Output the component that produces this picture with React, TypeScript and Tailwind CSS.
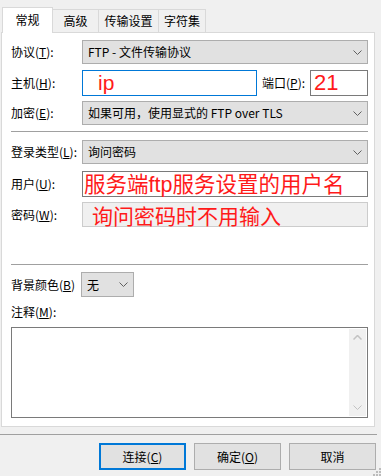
import type { ReactNode } from 'react'

const cjk = { fontFamily: '"Noto Sans CJK SC", "Noto Sans", sans-serif' }
const arial = { fontFamily: '"Liberation Sans", "Noto Sans CJK SC", sans-serif' }

function Chevron({ color = '#606060' }: { color?: string }) {
  return (
    <svg width="9" height="5" viewBox="0 0 9 5" className="shrink-0">
      <path d="M0.5 0.5 L4.5 4.5 L8.5 0.5" fill="none" stroke={color} strokeWidth="1" />
    </svg>
  )
}

function Label({ text, hot, suffix = ':' }: { text: string; hot: string; suffix?: string }) {
  return (
    <span className="block text-[12px] leading-[14px] text-black whitespace-nowrap">
      {text}(<u>{hot}</u>){suffix}
    </span>
  )
}

function Select({ value, className }: { value: string; className?: string }) {
  return (
    <div
      className={`flex items-center justify-between border border-[#adadad] bg-[#e1e1e1] pl-[5px] pr-[5px] ${className ?? ''}`}
    >
      <span className="text-[12px] leading-[14px] text-black whitespace-nowrap">{value}</span>
      <Chevron />
    </div>
  )
}

function Row({ label, children, className }: { label: ReactNode; children: ReactNode; className?: string }) {
  return (
    <div className={`flex items-center ${className ?? ''}`}>
      <div className="w-[71px] shrink-0">{label}</div>
      {children}
    </div>
  )
}

function Tab({ title, active, className }: { title: string; active?: boolean; className?: string }) {
  return (
    <div
      className={`flex items-center justify-center text-[12px] leading-[14px] text-black border border-[#d9d9d9] ${
        active ? 'h-[26px] border-b-0 bg-white pb-[2px]' : 'h-[24px] border-l-0 bg-[#f0f0f0]'
      } ${className ?? ''}`}
    >
      {title}
    </div>
  )
}

function Button({ children, primary }: { children: ReactNode; primary?: boolean }) {
  return (
    <div
      className={`flex h-[27px] w-[87px] items-center justify-center bg-[#e1e1e1] text-[12px] leading-[14px] text-black ${
        primary ? 'border-2 border-[#0078d7]' : 'border border-[#adadad]'
      }`}
    >
      {children}
    </div>
  )
}

export default function App() {
  return (
    <div className="relative flex h-[476px] w-[381px] flex-col overflow-hidden bg-[#f0f0f0]" style={cjk}>
      {/* tabs */}
      <div className="relative z-10 -mb-px mt-[7px] ml-[2px] flex items-end">
        <Tab title="常规" active className="w-[51px]" />
        <Tab title="高级" className="w-[46px]" />
        <Tab title="传输设置" className="w-[60px]" />
        <Tab title="字符集" className="w-[47px]" />
      </div>

      {/* panel */}
      <div className="ml-[1px] flex h-[395px] w-[374px] shrink-0 flex-col border border-[#d9d9d9] bg-white pl-[9px] pr-[6px] pt-[7px]">
        <Row label={<Label text="协议" hot="T" />}>
          <Select value="FTP - 文件传输协议" className="h-[24px] flex-1" />
        </Row>

        <Row label={<Label text="主机" hot="H" />} className="mt-[6px]">
          <div className="flex h-[26px] w-[175px] items-center border border-[#0078d7] bg-white pl-[15px]">
            <span className="text-[21px] leading-[24px] text-[#ff1a1a]" style={arial}>
              ip
            </span>
          </div>
          <div className="ml-[5px] w-[48px]">
            <Label text="端口" hot="P" />
          </div>
          <div className="flex h-[26px] flex-1 items-center border border-[#7a7a7a] bg-white pl-[3px]">
            <span className="text-[22px] leading-[24px] text-[#ff1a1a]" style={arial}>
              21
            </span>
          </div>
        </Row>

        <Row label={<Label text="加密" hot="E" />} className="mt-[5px]">
          <Select value="如果可用，使用显式的 FTP over TLS" className="h-[24px] flex-1" />
        </Row>

        <div className="mt-[6px] h-px shrink-0 bg-[#a0a0a0]" />

        <Row label={<Label text="登录类型" hot="L" />} className="mt-[8px]">
          <Select value="询问密码" className="h-[24px] flex-1" />
        </Row>

        <Row label={<Label text="用户" hot="U" />} className="mt-[7px]">
          <div className="flex h-[26px] flex-1 items-center border border-[#7a7a7a] bg-white pl-[1px]">
            <span className="whitespace-nowrap text-[21.5px] leading-[24px] text-[#ff1a1a]">
              服务端<span style={arial}>ftp</span>服务设置的用户名
            </span>
          </div>
        </Row>

        <Row label={<Label text="密码" hot="W" />} className="mt-[5px]">
          <div className="flex h-[25px] flex-1 items-center border border-[#cccccc] bg-[#f0f0f0] pl-[9px]">
            <span className="whitespace-nowrap text-[21px] leading-[24px] text-[#ff1a1a]">询问密码时不用输入</span>
          </div>
        </Row>

        <div className="mt-[37px] h-px shrink-0 bg-[#a0a0a0]" />

        <div className="mt-[7px] flex items-center">
          <div className="w-[70px] shrink-0">
            <Label text="背景颜色" hot="B" suffix="" />
          </div>
          <Select value="无" className="h-[25px] w-[53px]" />
        </div>

        <div className="mt-[8px]">
          <Label text="注释" hot="M" />
        </div>

        <div className="mt-[8px] flex h-[91px] shrink-0 justify-end border border-[#7a7a7a] bg-white p-px">
          <div className="flex w-[17px] flex-col items-center justify-between bg-[#f0f0f0] py-[6px]">
            <svg width="9" height="5" viewBox="0 0 9 5">
              <path d="M0.5 4.5 L4.5 0.5 L8.5 4.5" fill="none" stroke="#c2c2c2" strokeWidth="1.5" />
            </svg>
            <Chevron color="#c2c2c2" />
          </div>
        </div>
      </div>

      {/* bottom */}
      <div className="mt-[7px] h-px w-[377px] shrink-0 bg-[#a0a0a0]" />
      <div className="mt-[8px] flex justify-end gap-[8px] pr-[5px]">
        <Button primary>
          连接(<u>C</u>)
        </Button>
        <Button>
          确定(<u>O</u>)
        </Button>
        <Button>取消</Button>
      </div>

      {/* size grip */}
      <svg width="9" height="9" viewBox="0 0 9 9" className="absolute bottom-0 right-0">
        {[
          [7, 1],
          [4, 4],
          [7, 4],
          [1, 7],
          [4, 7],
          [7, 7],
        ].map(([x, y]) => (
          <rect key={`${x}-${y}`} x={x} y={y} width="2" height="2" fill="#bcbcbc" />
        ))}
      </svg>
    </div>
  )
}
